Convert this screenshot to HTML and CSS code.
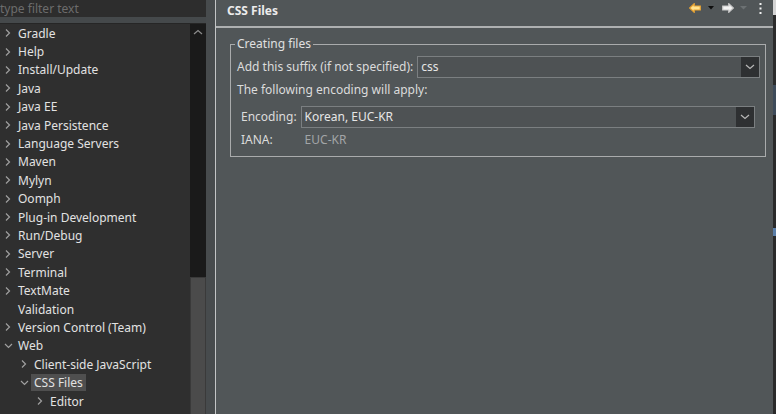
FILE: index.html
```html
<!DOCTYPE html>
<html lang="en">
<head>
<meta charset="utf-8">
<title>Preferences - CSS Files</title>
<link rel="stylesheet" href="styles.css">
</head>
<body>
<div class="app">
  <aside class="nav">
    <div class="filter"><span class="filter-text">type filter text</span></div>
    <div class="tree-wrap">
      <ul class="tree">
        <li class="row l0"><span class="tw"><svg width="14" height="18" viewBox="0 0 14 18"><polyline points="2,5.5 5.5,9 2,12.5" /></svg></span><span class="lbl">Gradle</span></li>
        <li class="row l0"><span class="tw"><svg width="14" height="18" viewBox="0 0 14 18"><polyline points="2,5.5 5.5,9 2,12.5" /></svg></span><span class="lbl">Help</span></li>
        <li class="row l0"><span class="tw"><svg width="14" height="18" viewBox="0 0 14 18"><polyline points="2,5.5 5.5,9 2,12.5" /></svg></span><span class="lbl">Install/Update</span></li>
        <li class="row l0"><span class="tw"><svg width="14" height="18" viewBox="0 0 14 18"><polyline points="2,5.5 5.5,9 2,12.5" /></svg></span><span class="lbl">Java</span></li>
        <li class="row l0"><span class="tw"><svg width="14" height="18" viewBox="0 0 14 18"><polyline points="2,5.5 5.5,9 2,12.5" /></svg></span><span class="lbl">Java EE</span></li>
        <li class="row l0"><span class="tw"><svg width="14" height="18" viewBox="0 0 14 18"><polyline points="2,5.5 5.5,9 2,12.5" /></svg></span><span class="lbl">Java Persistence</span></li>
        <li class="row l0"><span class="tw"><svg width="14" height="18" viewBox="0 0 14 18"><polyline points="2,5.5 5.5,9 2,12.5" /></svg></span><span class="lbl">Language Servers</span></li>
        <li class="row l0"><span class="tw"><svg width="14" height="18" viewBox="0 0 14 18"><polyline points="2,5.5 5.5,9 2,12.5" /></svg></span><span class="lbl">Maven</span></li>
        <li class="row l0"><span class="tw"><svg width="14" height="18" viewBox="0 0 14 18"><polyline points="2,5.5 5.5,9 2,12.5" /></svg></span><span class="lbl">Mylyn</span></li>
        <li class="row l0"><span class="tw"><svg width="14" height="18" viewBox="0 0 14 18"><polyline points="2,5.5 5.5,9 2,12.5" /></svg></span><span class="lbl">Oomph</span></li>
        <li class="row l0"><span class="tw"><svg width="14" height="18" viewBox="0 0 14 18"><polyline points="2,5.5 5.5,9 2,12.5" /></svg></span><span class="lbl">Plug-in Development</span></li>
        <li class="row l0"><span class="tw"><svg width="14" height="18" viewBox="0 0 14 18"><polyline points="2,5.5 5.5,9 2,12.5" /></svg></span><span class="lbl">Run/Debug</span></li>
        <li class="row l0"><span class="tw"><svg width="14" height="18" viewBox="0 0 14 18"><polyline points="2,5.5 5.5,9 2,12.5" /></svg></span><span class="lbl">Server</span></li>
        <li class="row l0"><span class="tw"><svg width="14" height="18" viewBox="0 0 14 18"><polyline points="2,5.5 5.5,9 2,12.5" /></svg></span><span class="lbl">Terminal</span></li>
        <li class="row l0"><span class="tw"><svg width="14" height="18" viewBox="0 0 14 18"><polyline points="2,5.5 5.5,9 2,12.5" /></svg></span><span class="lbl">TextMate</span></li>
        <li class="row l0"><span class="tw"></span><span class="lbl">Validation</span></li>
        <li class="row l0"><span class="tw"><svg width="14" height="18" viewBox="0 0 14 18"><polyline points="2,5.5 5.5,9 2,12.5" /></svg></span><span class="lbl">Version Control (Team)</span></li>
        <li class="row l0"><span class="tw"><svg width="14" height="18" viewBox="0 0 14 18"><polyline points="1,7 4.5,10.5 8,7" /></svg></span><span class="lbl">Web</span></li>
        <li class="row l1"><span class="tw"><svg width="14" height="18" viewBox="0 0 14 18"><polyline points="2,5.5 5.5,9 2,12.5" /></svg></span><span class="lbl">Client-side JavaScript</span></li>
        <li class="row l1"><span class="tw"><svg width="14" height="18" viewBox="0 0 14 18"><polyline points="1,7 4.5,10.5 8,7" /></svg></span><span class="lbl selected">CSS Files</span></li>
        <li class="row l2"><span class="tw"><svg width="14" height="18" viewBox="0 0 14 18"><polyline points="2,5.5 5.5,9 2,12.5" /></svg></span><span class="lbl">Editor</span></li>
      </ul>
      <div class="vscroll">
        <svg class="vscroll-up" width="16" height="16" viewBox="0 0 16 16"><polyline points="4,10 8,6.5 12,10" /></svg>
        <div class="thumb"></div>
      </div>
    </div>
  </aside>
  <div class="sash"></div>
  <main class="page">
    <header class="page-head">
      <h1 class="page-title">CSS Files</h1>
      <div class="tools">
        <svg class="t-back" width="12" height="10" viewBox="0 0 12 10"><path d="M0.7 5 L5.2 0.7 L5.2 3 L11.3 3 L11.3 7 L5.2 7 L5.2 9.3 Z" /></svg>
        <svg class="t-drop" width="6" height="4" viewBox="0 0 6 4"><path d="M0 0 L6 0 L3 3.5 Z" /></svg>
        <svg class="t-fwd" width="12" height="10" viewBox="0 0 12 10"><path d="M11.3 5 L6.8 0.7 L6.8 3 L0.7 3 L0.7 7 L6.8 7 L6.8 9.3 Z" /></svg>
        <svg class="t-drop dim" width="7" height="4" viewBox="0 0 7 4"><path d="M0 0 L7 0 L3.5 3.5 Z" /></svg>
        <svg class="t-more" width="3" height="11" viewBox="0 0 3 11"><rect x="0.5" y="0" width="2" height="2" /><rect x="0.5" y="4.5" width="2" height="2" /><rect x="0.5" y="9" width="2" height="2" /></svg>
      </div>
    </header>
    <div class="page-body">
      <fieldset class="group">
        <legend class="group-title">Creating files</legend>
        <div class="field">
          <label class="field-label">Add this suffix (if not specified):</label>
          <div class="combo">
            <span class="combo-text">css</span>
            <span class="combo-btn"><svg width="10" height="6" viewBox="0 0 10 6"><polyline points="1,1 5,4.5 9,1" /></svg></span>
          </div>
        </div>
        <div class="note">The following encoding will apply:</div>
        <div class="enc">
          <label class="field-label">Encoding:</label>
          <div class="combo">
            <span class="combo-text">Korean, EUC-KR</span>
            <span class="combo-btn"><svg width="10" height="6" viewBox="0 0 10 6"><polyline points="1,1 5,4.5 9,1" /></svg></span>
          </div>
          <span class="field-label">IANA:</span>
          <span class="iana-val">EUC-KR</span>
        </div>
      </fieldset>
    </div>
  </main>
  <div class="edge"></div>
</div>
</body>
</html>
```

FILE: styles.css
```css
* { box-sizing: border-box; }

html, body {
  margin: 0;
  padding: 0;
  width: 776px;
  height: 414px;
  overflow: hidden;
  background: #45494b;
}

body {
  font-family: "Noto Sans", "Open Sans", sans-serif;
  font-size: 12px;
  line-height: 16px;
  color: #dcdcdc;
}

.app {
  display: flex;
  width: 776px;
  height: 414px;
}

/* ---------- left navigation ---------- */
.nav {
  width: 206px;
  flex: none;
  display: flex;
  flex-direction: column;
  background: #45494b;
}

.filter {
  height: 17px;
  flex: none;
  background: #2d2d2d;
  overflow: hidden;
  display: flex;
  align-items: center;
  padding-bottom: 1px;
}

.filter-text {
  color: #6c6c6c;
  white-space: nowrap;
  line-height: 15px;
}

.tree-wrap {
  margin-top: 6px;
  flex: 1;
  display: flex;
  min-height: 0;
  border-top: 1px solid #262626;
}

.tree {
  list-style: none;
  margin: 0;
  padding: 0;
  flex: 1;
  background: #2f2f2f;
  overflow: hidden;
  color: #e2e2e2;
}

.row {
  height: 18.4px;
  display: flex;
  align-items: center;
  white-space: nowrap;
}

.row.l0 { padding-left: 4px; }
.row.l1 { padding-left: 20px; }
.row.l2 { padding-left: 36px; }

.tw {
  width: 14px;
  height: 18px;
  flex: none;
  display: block;
}

.tw svg {
  display: block;
  fill: none;
  stroke: #a0a0a0;
  stroke-width: 1.2;
}

.lbl {
  display: block;
  line-height: 17px;
}

.lbl.selected {
  background: #4f4f4f;
  margin-left: -3px;
  padding: 0 3px;
}

.vscroll {
  width: 16px;
  flex: none;
  background: #1a1a1a;
  display: flex;
  flex-direction: column;
}

.vscroll-up {
  display: block;
  fill: none;
  stroke: #8c8c8c;
  stroke-width: 1.2;
}

.thumb {
  margin-top: auto;
  height: 137px;
  background: #4b4b4b;
  border: 1px solid #3a3a3a;
  border-bottom: none;
}

.sash {
  width: 10px;
  flex: none;
  background: #474b4d;
  border-right: 1px solid #c3c5c6;
}

/* ---------- preference page ---------- */
.page {
  flex: 1;
  min-width: 0;
  background: #515658;
  display: flex;
  flex-direction: column;
}

.page-head {
  height: 28px;
  flex: none;
  display: flex;
  align-items: flex-start;
  padding: 3px 11px 0 11px;
  border-bottom: 2px solid #aeb0b1;
}

.page-title {
  margin: 0;
  font-size: 12px;
  line-height: 16px;
  font-weight: bold;
  color: #ececec;
}

.tools {
  margin-left: auto;
  display: flex;
  align-items: center;
  height: 10px;
}

.tools svg { display: block; }

.t-back {
  fill: #ffe28f;
  stroke: #e6a233;
  stroke-width: 1.2;
}

.t-fwd {
  margin-left: 8px;
  fill: #f4f4f4;
  stroke: #c8c8c8;
  stroke-width: 1.2;
}

.t-drop {
  margin-left: 7px;
  fill: #0e0e0e;
}

.t-drop.dim {
  margin-left: 6px;
  fill: #6c7173;
}

.t-more {
  margin-left: 12px;
  fill: #f0f0f0;
}

.page-body {
  padding: 8px 7px 0 14px;
}

.group {
  margin: 0;
  border: 1px solid #a9abac;
  padding: 0 5px 8px 4px;
  min-width: 0;
}

.group-title {
  padding: 0 2px;
  line-height: 16px;
  color: #e0e0e0;
}

.field {
  display: flex;
  align-items: center;
  gap: 4px;
  padding-left: 2px;
  margin-top: 4px;
}

.field-label {
  white-space: nowrap;
  color: #dcdcdc;
}

.combo {
  flex: 1;
  min-width: 0;
  height: 22px;
  display: flex;
  align-items: stretch;
  border: 1px solid #7b7f81;
  background: #4e5254;
}

.combo-text {
  padding-left: 3px;
  line-height: 20px;
  color: #e6e6e6;
}

.combo-btn {
  margin-left: auto;
  width: 18px;
  background: #2e3032;
  display: flex;
  align-items: center;
  justify-content: center;
}

.combo-btn svg {
  display: block;
  fill: none;
  stroke: #b8b8b8;
  stroke-width: 1.2;
}

.note {
  margin-top: 4px;
  padding-left: 2px;
}

.enc {
  display: grid;
  grid-template-columns: auto 1fr;
  column-gap: 4px;
  row-gap: 4px;
  align-items: center;
  margin: 8px 5px 0 6px;
}

.iana-val {
  padding-left: 4px;
  color: #a2a5a7;
}

.edge {
  width: 3px;
  flex: none;
  background: linear-gradient(to bottom,
    #d4d4d4 0, #d4d4d4 15px,
    #2c2c2c 15px, #2c2c2c 85px,
    #3e4b5a 85px, #3e4b5a 115px,
    #2a2a2a 115px, #2a2a2a 228px,
    #5a7ea8 228px, #5a7ea8 236px,
    #2a2a2a 236px);
}
```
